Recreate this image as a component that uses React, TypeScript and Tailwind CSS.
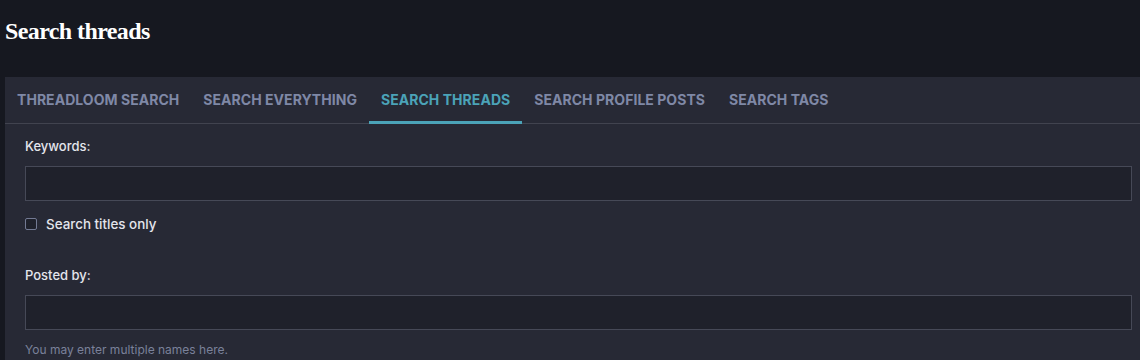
const tabs = [
  'Threadloom search',
  'Search everything',
  'Search threads',
  'Search profile posts',
  'Search tags',
];

function Tab({ label, active }: { label: string; active?: boolean }) {
  return (
    <div
      className={
        'h-[47px] -mb-px px-3 flex items-center uppercase text-[14px] tracking-[0.04px] font-bold border-b-[3px] ' +
        (active ? 'text-[#4ba3b8] border-[#4ba3b8]' : 'text-[#7f88a6] border-transparent')
      }
    >
      <span className="pt-[1px]">{label}</span>
    </div>
  );
}

function Field({ label, children }: { label: string; children?: React.ReactNode }) {
  return (
    <div>
      <div className="text-[13px] leading-5 font-medium text-[#e4e5ec]">{label}</div>
      <input
        type="text"
        className="mt-[10px] block w-full h-[35px] bg-[#1f212b] border border-[#464957] outline-none"
      />
      {children}
    </div>
  );
}

export default function App() {
  return (
    <div
      className="w-[1140px] h-[360px] overflow-hidden bg-[#161820]"
      style={{ fontFamily: 'Inter, "Liberation Sans", sans-serif' }}
    >
      <div className="h-[77px] pl-[5px] pt-[16px]">
        <h1
          className="text-[24px] leading-[30px] font-bold text-white tracking-[-0.6px]"
          style={{ fontFamily: '"Liberation Serif", serif' }}
        >
          Search threads
        </h1>
      </div>
      <div className="ml-[5px] w-[1147px] h-full bg-[#272935]">
        <div className="flex border-b border-[#41434f]">
          {tabs.map((t, i) => (
            <Tab key={t} label={t} active={i === 2} />
          ))}
        </div>
        <div className="pl-5 pr-5 pt-3">
          <Field label="Keywords:">
            <label className="mt-[13px] flex items-center gap-[9px] h-5 text-[13.4px] font-medium text-[#e4e5ec]">
              <span className="w-3 h-3 border border-[#737a93] rounded-[2px] bg-[#1f212b]" />
              Search titles only
            </label>
          </Field>
          <div className="mt-[31px]">
            <Field label="Posted by:">
              <div className="mt-[11px] text-[12px] leading-[18px] text-[#7a819a]">
                You may enter multiple names here.
              </div>
            </Field>
          </div>
        </div>
      </div>
    </div>
  );
}
